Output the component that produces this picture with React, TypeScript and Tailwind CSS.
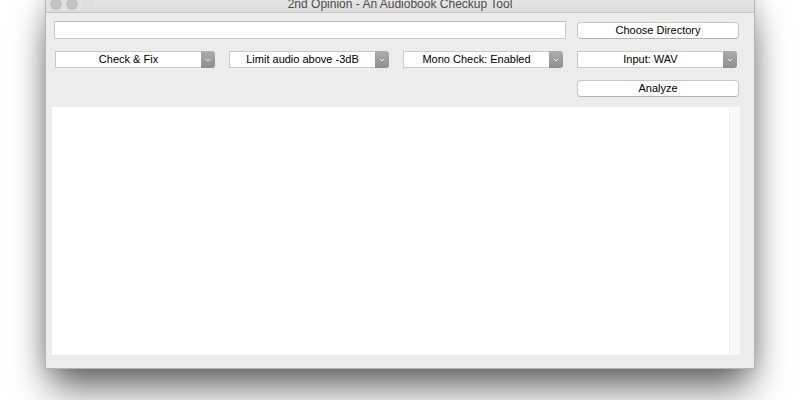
const font = { fontFamily: '"Liberation Sans", Arial, sans-serif' };

function Dropdown({ label }: { label: string }) {
  return (
    <div className="flex h-[17px] w-[160px]">
      <div className="flex flex-1 items-center justify-center border border-[#c9c9c9] border-r-0 bg-white text-[11px] text-black">
        {label}
      </div>
      <div className="flex w-[14px] items-center justify-center rounded-r-[3px] bg-gradient-to-b from-[#adadad] to-[#8e8e8e]">
        <svg width="6" height="4" viewBox="0 0 6 4">
          <path d="M0.8 0.8 L3 3 L5.2 0.8" stroke="#e8e8e8" strokeWidth="1" fill="none" />
        </svg>
      </div>
    </div>
  );
}

function Button({ label }: { label: string }) {
  return (
    <div className="flex h-[17px] w-[162px] items-center justify-center rounded-[4px] border border-[#c6c6c6] border-b-[#b2b2b2] bg-white text-[11px] text-black">
      {label}
    </div>
  );
}

export default function App() {
  return (
    <div className="h-[400px] w-[800px] overflow-hidden bg-white" style={font}>
      <div className="ml-[45px] mt-[-8px] w-[710px] border border-[#b5b5b5] bg-[#ececec] shadow-[0_24px_36px_-6px_rgba(0,0,0,0.6),0_0_22px_rgba(0,0,0,0.18)]">
        {/* title bar */}
        <div className="relative flex h-[20px] items-center border-b border-[#c4c4c4] bg-gradient-to-b from-[#ebebeb] to-[#dcdcdc] px-[4px]">
          <div className="flex gap-[4px] pt-[2px]">
            <span className="h-[12px] w-[12px] rounded-full bg-[#c3c3c3]" />
            <span className="h-[12px] w-[12px] rounded-full bg-[#c3c3c3]" />
            <span className="h-[12px] w-[12px] rounded-full bg-[#dedede]" />
          </div>
          <div className="absolute inset-x-0 top-[1px] flex h-full items-center justify-center text-[12px] text-[#4c4c4c]">
            2nd Opinion - An Audiobook Checkup Tool
          </div>
        </div>

        {/* body */}
        <div className="flex flex-col pb-[13px] pl-[6px] pr-[14px] pt-[8px]">
          <div className="flex items-center gap-[11px] pl-[2px]">
            <div className="h-[18px] w-[512px] border border-[#cacaca] border-t-[#bcbcbc] bg-white" />
            <Button label="Choose Directory" />
          </div>

          <div className="mt-[12px] flex gap-[14px] pl-[3px]">
            <Dropdown label="Check & Fix" />
            <Dropdown label="Limit audio above -3dB" />
            <Dropdown label="Mono Check: Enabled" />
            <Dropdown label="Input: WAV" />
          </div>

          <div className="mt-[12px] flex justify-end pr-[1px]">
            <Button label="Analyze" />
          </div>

          <div className="mt-[10px] flex h-[248px] w-[688px] bg-white">
            <div className="flex-1" />
            <div className="w-[11px] border-l border-[#ededed] bg-[#f9f9f9]" />
          </div>
        </div>
      </div>
    </div>
  );
}
